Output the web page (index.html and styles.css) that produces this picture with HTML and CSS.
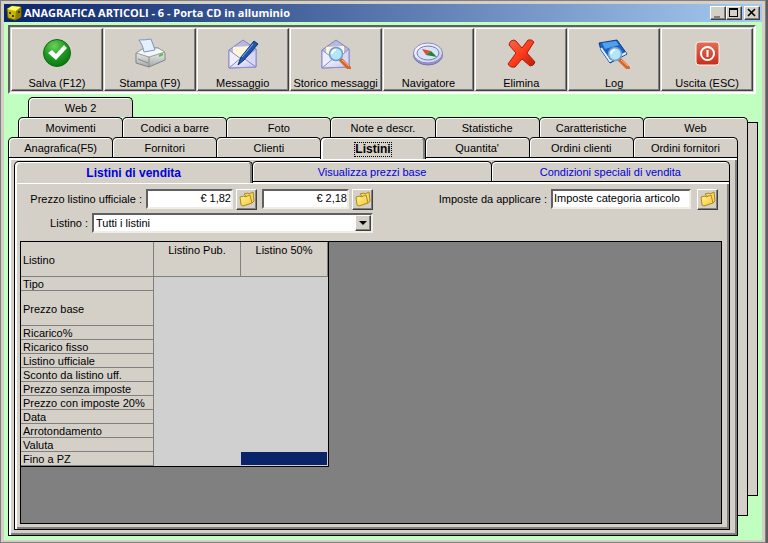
FILE: index.html
```html
<!DOCTYPE html>
<html lang="it">
<head>
    <meta charset="UTF-8">
    <meta name="viewport" content="width=device-width, initial-scale=1.0">
    <title>Anagrafica articoli</title>
    <link rel="stylesheet" href="styles.css">
</head>
<body>

    <!-- Shared icon shapes -->
    <svg class="defs" width="0" height="0" aria-hidden="true">
        <defs>
            <radialGradient id="green" cx="0.4" cy="0.25" r="0.8">
                <stop offset="0" stop-color="#6cd05a"/>
                <stop offset="0.5" stop-color="#1f9e22"/>
                <stop offset="1" stop-color="#0a7212"/>
            </radialGradient>
            <linearGradient id="paper" x1="0" y1="0" x2="1" y2="1">
                <stop offset="0" stop-color="#ffffff"/>
                <stop offset="1" stop-color="#c4c6ee"/>
            </linearGradient>
            <linearGradient id="grey" x1="0" y1="0" x2="0" y2="1">
                <stop offset="0" stop-color="#ffffff"/>
                <stop offset="1" stop-color="#a4a8a8"/>
            </linearGradient>
            <linearGradient id="red" x1="0" y1="0" x2="1" y2="1">
                <stop offset="0" stop-color="#f4694a"/>
                <stop offset="0.5" stop-color="#ff3c1c"/>
                <stop offset="1" stop-color="#b01c08"/>
            </linearGradient>
            <linearGradient id="brick" x1="0" y1="0" x2="0" y2="1">
                <stop offset="0" stop-color="#e07058"/>
                <stop offset="1" stop-color="#c82c18"/>
            </linearGradient>
            <linearGradient id="yellow" x1="0" y1="0" x2="1" y2="1">
                <stop offset="0" stop-color="#fff490"/>
                <stop offset="1" stop-color="#f4c840"/>
            </linearGradient>
            <symbol id="folder" viewBox="0 0 16 16">
                <path d="M5 3l4-1 1 1 4-2 1 9-2 2z" fill="#f8d860" stroke="#b08818"/>
                <path d="M1 6l4-1 1 1 5-2 2 8-9 3-2-1z" fill="url(#yellow)" stroke="#b08818"/>
            </symbol>
            <symbol id="envelope" viewBox="0 0 32 32">
                <path d="M2 13L16 3l13 9v18l-27 1z" fill="#b8b8e0" stroke="#8484bc"/>
                <path d="M6 10l18-1v14H6z" fill="#fff6d8"/>
                <path d="M2 13l12 9L2 31z" fill="#eeeeff" stroke="#8c8cc8"/>
                <path d="M29 12l-12 10 12 8z" fill="#d8d8f6" stroke="#8c8cc8"/>
                <path d="M2 31l13-11 14 10z" fill="url(#paper)" stroke="#8c8cc8"/>
            </symbol>
            <symbol id="lens" viewBox="0 0 32 32">
                <path d="M21 23l8 8" stroke="#d8662c" stroke-width="4" stroke-linecap="round"/>
                <path d="M22 23l7 6" stroke="#ffb880" stroke-width="1"/>
                <circle cx="16" cy="17" r="6.500" fill="#b4e4fa" stroke="#6c9cc8" stroke-width="1.500"/>
                <path d="M12 17a4 4 0 0 1 4-4" fill="none" stroke="#fff" stroke-width="2"/>
            </symbol>
        </defs>
    </svg>

    <div class="window">
        <header class="titlebar">
            <svg class="app-icon" viewBox="0 0 16 16">
                <path d="M1 4l5-3 9 1v10l-6 3-7-2z" fill="#c8b800" stroke="#6c6000"/>
                <path d="M1 4l5-3 9 1-5 4z" fill="#ffff60"/>
                <path d="M10 6l5-4v10l-6 3z" fill="#8c8000"/>
                <path d="M3 7h2v2H3zM6 10h2v2H6zM12 6h2v2h-2z" fill="#3c3600"/>
            </svg>
            <h1>ANAGRAFICA ARTICOLI - 6 - Porta CD in alluminio</h1>
            <div class="window-buttons">
                <button type="button" aria-label="Riduci a icona">
                    <svg viewBox="0 0 12 10"><path d="M2 8h6v2H2z" fill="#808080"/></svg>
                </button>
                <button type="button" aria-label="Ingrandisci">
                    <svg viewBox="0 0 12 10"><path d="M1 0h9v9H1zM2 2v6h7V2z" fill="#000" fill-rule="evenodd"/></svg>
                </button>
                <button type="button" class="close" aria-label="Chiudi">
                    <svg viewBox="0 0 12 10"><path d="M2 1l7 7M9 1L2 8" stroke="#000" stroke-width="1.600"/></svg>
                </button>
            </div>
        </header>

        <nav class="toolbar">
            <button type="button">
                <svg viewBox="0 0 32 32">
                    <circle cx="16" cy="16" r="13.500" fill="url(#green)" stroke="#0c6c10"/>
                    <path d="M7 16l4-3 4 4 8-9 3 3-11 12z" fill="#fff"/>
                </svg>
                <span>Salva (F12)</span>
            </button>
            <button type="button">
                <svg viewBox="0 0 32 32">
                    <path d="M2 16l8-5h14l7 5v7l-16 7-13-4z" fill="url(#grey)" stroke="#808484"/>
                    <path d="M2 16l13 4 16-5-7-4H10z" fill="#f4f6f6" stroke="#9c9c9c"/>
                    <path d="M15 20v10M4 22l10 4" stroke="#888" fill="none"/>
                    <path d="M5 3q7 0 12-1l4 11-11 2q-1-7-5-12z" fill="#e4f0ff" stroke="#7c94c4"/>
                    <path d="M25 19l4-2" stroke="#58c048" stroke-width="2"/>
                </svg>
                <span>Stampa (F9)</span>
            </button>
            <button type="button">
                <svg viewBox="0 0 32 32">
                    <use href="#envelope"/>
                    <path d="M27 4l4 3-14 16-6 5 3-8z" fill="#2058b0" stroke="#103070"/>
                    <path d="M26 7L15 20" stroke="#80b8f0"/>
                </svg>
                <span>Messaggio</span>
            </button>
            <button type="button">
                <svg viewBox="0 0 32 32">
                    <use href="#envelope"/>
                    <use href="#lens"/>
                </svg>
                <span>Storico messaggi</span>
            </button>
            <button type="button">
                <svg viewBox="0 0 32 32">
                    <ellipse cx="16" cy="18" rx="14.500" ry="10" fill="#9494c8" stroke="#7474ac"/>
                    <ellipse cx="16" cy="16" rx="14.500" ry="10" fill="url(#paper)" stroke="#8c8cc0"/>
                    <ellipse cx="16" cy="16" rx="11" ry="7" fill="#d8e4fa" stroke="#7c7cac"/>
                    <path d="M10 12l9 2-5 4z" fill="#e84830"/>
                    <path d="M19 14l6 6-11-2z" fill="#188838"/>
                </svg>
                <span>Navigatore</span>
            </button>
            <button type="button">
                <svg viewBox="0 0 32 32">
                    <path d="M6 4q3-2 5 0l6 7 6-8q4-1 6 2l-7 11 8 9q-1 4-5 4l-8-7-7 8q-5 1-7-3l8-11-7-8q0-2 2-4z" fill="url(#red)" stroke="#a82010"/>
                </svg>
                <span>Elimina</span>
            </button>
            <button type="button">
                <svg viewBox="0 0 32 32">
                    <path d="M1 6l18-3 10 14-17 9L3 13z" fill="#1c60c4" stroke="#0c3c90"/>
                    <path d="M3 11l9 13 16-8" fill="none" stroke="#e4f0ff" stroke-width="2"/>
                    <path d="M4 6l14-2 3 4-14 4z" fill="#50a0f0"/>
                    <use href="#lens" x="1"/>
                </svg>
                <span>Log</span>
            </button>
            <button type="button">
                <svg viewBox="0 0 32 32">
                    <rect x="5" y="5" width="23" height="23" rx="3" fill="url(#brick)" stroke="#fff0e8"/>
                    <circle cx="16.500" cy="16.500" r="6.500" fill="none" stroke="#fff" stroke-width="2"/>
                    <path d="M16.500 13v7" stroke="#fff" stroke-width="2"/>
                </svg>
                <span>Uscita (ESC)</span>
            </button>
        </nav>

        <main class="stack">
            <div class="stack-back">
                <div class="tab-row row-1">
                    <button type="button" class="tab">Web 2</button>
                </div>
                <div class="tab-row row-2">
                    <button type="button" class="tab">Movimenti</button>
                    <button type="button" class="tab">Codici a barre</button>
                    <button type="button" class="tab">Foto</button>
                    <button type="button" class="tab">Note e descr.</button>
                    <button type="button" class="tab">Statistiche</button>
                    <button type="button" class="tab">Caratteristiche</button>
                    <button type="button" class="tab">Web</button>
                </div>
                <div class="stack-middle">
                    <div class="stack-front">
                        <div class="tab-row row-3">
                            <button type="button" class="tab">Anagrafica(F5)</button>
                            <button type="button" class="tab">Fornitori</button>
                            <button type="button" class="tab">Clienti</button>
                            <button type="button" class="tab selected"><span class="focus">Listini</span></button>
                            <button type="button" class="tab">Quantita'</button>
                            <button type="button" class="tab">Ordini clienti</button>
                            <button type="button" class="tab">Ordini fornitori</button>
                        </div>
                        <div class="page outer">
                            <div class="tab-row inner-tabs">
                                <button type="button" class="tab selected">Listini di vendita</button>
                                <button type="button" class="tab">Visualizza prezzi base</button>
                                <button type="button" class="tab">Condizioni speciali di vendita</button>
                            </div>
                            <div class="page inner">
                                <form>
                                    <div class="fields">
                                        <label class="wide" for="prezzo">Prezzo listino ufficiale :</label>
                                        <input class="amount" type="text" id="prezzo" value="€ 1,82">
                                        <button type="button" class="browse" aria-label="Apri prezzo"><svg><use href="#folder"/></svg></button>
                                        <input class="amount second" type="text" value="€ 2,18" aria-label="Prezzo con imposte">
                                        <button type="button" class="browse" aria-label="Apri prezzo con imposte"><svg><use href="#folder"/></svg></button>
                                        <label class="push" for="imposte">Imposte da applicare :</label>
                                        <input class="tax" type="text" id="imposte" value="Imposte categoria articolo">
                                        <button type="button" class="browse last" aria-label="Apri imposte"><svg><use href="#folder"/></svg></button>
                                    </div>
                                    <div class="fields">
                                        <label class="narrow" for="listino">Listino :</label>
                                        <div class="combo">
                                            <select id="listino">
                                                <option>Tutti i listini</option>
                                            </select>
                                            <span class="arrow"></span>
                                        </div>
                                    </div>
                                </form>

                                <div class="grid">
                                    <table>
                                        <thead>
                                            <tr class="head"><th>Listino</th><th>Listino Pub.</th><th>Listino 50%</th></tr>
                                        </thead>
                                        <tbody>
                                            <tr><th>Tipo</th><td></td><td></td></tr>
                                            <tr class="tall"><th>Prezzo base</th><td></td><td></td></tr>
                                            <tr><th>Ricarico%</th><td></td><td></td></tr>
                                            <tr><th>Ricarico fisso</th><td></td><td></td></tr>
                                            <tr><th>Listino ufficiale</th><td></td><td></td></tr>
                                            <tr><th>Sconto da listino uff.</th><td></td><td></td></tr>
                                            <tr><th>Prezzo senza imposte</th><td></td><td></td></tr>
                                            <tr><th>Prezzo con imposte 20%</th><td></td><td></td></tr>
                                            <tr><th>Data</th><td></td><td></td></tr>
                                            <tr><th>Arrotondamento</th><td></td><td></td></tr>
                                            <tr><th>Valuta</th><td></td><td></td></tr>
                                            <tr><th>Fino a PZ</th><td></td><td class="current"></td></tr>
                                        </tbody>
                                    </table>
                                </div>
                            </div>
                        </div>
                    </div>
                    <div class="edge edge-2"></div>
                </div>
            </div>
            <div class="edge edge-1"></div>
        </main>
    </div>

</body>
</html>
```

FILE: styles.css
```css
* {
    box-sizing: border-box;
}

body {
    margin: 0;
    padding-right: 2px;
    min-height: 100vh;
    display: flex;
    background: #605c60;
    font-family: "Liberation Sans", Arial, sans-serif;
    font-size: 11px;
    color: #000;
}

button, input, select {
    font: inherit;
    color: inherit;
    margin: 0;
    padding: 0;
    border-radius: 0;
}

.defs {
    position: absolute;
}

.window {
    flex: 1;
    display: flex;
    flex-direction: column;
    background: #c0ffc0;
    border: 4px solid #d4d0c8;
    border-bottom-width: 3px;
    outline: 1px solid #808080;
    outline-offset: -1px;
}

/* Title bar */
.titlebar {
    display: flex;
    align-items: center;
    height: 18px;
    padding: 0 2px;
    background: linear-gradient(to right, #0a246a, #a6caf0);
}

.app-icon {
    width: 16px;
    height: 16px;
}

.titlebar h1 {
    flex: 1;
    margin: 0 0 0 2px;
    font-family: "Open Sans", Tahoma, sans-serif;
    font-size: 11px;
    font-weight: bold;
    line-height: 18px;
    color: #fff;
}

.window-buttons {
    display: flex;
}

.window-buttons button {
    width: 16px;
    height: 14px;
    display: flex;
    align-items: center;
    justify-content: center;
    background: #d4d0c8;
    border: 1px solid;
    border-color: #fff #404040 #404040 #fff;
    box-shadow: inset -1px -1px #808080;
}

.window-buttons .close {
    margin-left: 2px;
}

.window-buttons svg {
    width: 12px;
    height: 10px;
}

/* Toolbar */
.toolbar {
    display: flex;
    gap: 1px;
    height: 69px;
    margin: 3px 6px 0 4px;
    padding: 1px;
    background: #d4d0c8;
    border: 2px solid;
    border-color: #606060 #fff #fff #606060;
}

.toolbar button {
    flex: 1 1 0;
    min-width: 0;
    display: flex;
    flex-direction: column;
    align-items: center;
    justify-content: space-between;
    padding: 8px 0 0;
    background: #d4d0c8;
    border: 1px solid;
    border-color: #fff #404040 #404040 #fff;
    box-shadow: inset -1px -1px #808080;
    white-space: nowrap;
    line-height: 14px;
}

.toolbar svg {
    width: 32px;
    height: 32px;
}

/* Stacked tab pages */
.stack {
    flex: 1;
    display: flex;
    margin: 3px 4px 4px 4px;
}

.stack-back {
    flex: 1;
    display: flex;
    flex-direction: column;
}

.stack-middle {
    flex: 1;
    display: flex;
}

.stack-front {
    flex: 1;
    display: flex;
    flex-direction: column;
}

.edge {
    width: 10px;
    background: #d4d0c8;
    border-right: 1px solid #000;
    border-bottom: 1px solid #000;
}

.edge-1 {
    margin: 25px 0 40px;
    border-top: 1px solid #000;
}

.edge-2 {
    margin-bottom: 20px;
}

.tab-row {
    display: flex;
    height: 20px;
    padding-left: 1px;
}

.row-1 {
    margin-left: 20px;
}

.row-2 {
    margin-left: 10px;
}

.row-1 .tab {
    flex: 0 0 105px;
}

.row-3 {
    background: linear-gradient(to right, transparent 10px, #d4d0c8 10px);
}

.tab {
    flex: 1 1 0;
    min-width: 0;
    margin-left: -1px;
    background: #d4d0c8;
    border: 1px solid #000;
    border-bottom: none;
    border-radius: 5px 5px 0 0;
    box-shadow: inset 1px 1px #fff;
    white-space: nowrap;
    line-height: 18px;
}

.tab.selected {
    position: relative;
    height: 22px;
    box-shadow: inset 2px 1px #fff, inset -2px 0 #808080;
    font-weight: bold;
    font-size: 12px;
}

.focus {
    display: inline-block;
    line-height: 13px;
    outline: 1px dotted #000;
}

.page {
    flex: 1;
    display: flex;
    flex-direction: column;
    background: #d4d0c8;
    border: 1px solid #000;
    box-shadow: inset 2px 2px #fff, inset -2px -2px #808080;
}

.outer {
    padding: 3px 7px 5px 5px;
}

.inner-tabs .tab {
    color: #0000e0;
}

.inner {
    padding: 7px 7px 5px 5px;
}

/* Fields */
.fields {
    display: flex;
    align-items: center;
    height: 20px;
    margin-bottom: 4px;
}

.fields label {
    margin-right: 4px;
    text-align: right;
    white-space: nowrap;
}

.fields .wide {
    width: 122px;
}

.fields .narrow {
    width: 68px;
}

.fields .push {
    margin-left: auto;
}

.fields input,
.fields select {
    height: 20px;
    padding: 0 1px 2px;
    background: #fff;
    border: 2px solid;
    border-color: #606060 #f0ede6 #f0ede6 #606060;
}

.fields .amount {
    width: 87px;
    padding-right: 0;
    text-align: right;
}

.fields .second {
    margin-left: 5px;
}

.fields .tax {
    width: 140px;
}

.browse {
    display: flex;
    align-items: center;
    justify-content: center;
    width: 21px;
    height: 21px;
    margin-left: 3px;
    background: #d4d0c8;
    border: 1px solid;
    border-color: #fff #404040 #404040 #fff;
    box-shadow: inset -1px -1px #808080;
}

.browse svg {
    width: 16px;
    height: 16px;
}

.browse.last {
    margin: 0 4px 0 6px;
}

.combo {
    position: relative;
    width: 281px;
}

.fields select {
    display: block;
    width: 100%;
    padding: 0 18px 0 2px;
    appearance: none;
}

/* Drop-down button drawn over the select */
.arrow {
    position: absolute;
    top: 2px;
    right: 2px;
    width: 16px;
    height: 16px;
    background: #d4d0c8;
    border: 1px solid;
    border-color: #fff #404040 #404040 #fff;
    box-shadow: inset -1px -1px #808080;
    pointer-events: none;
}

.arrow::after {
    content: "";
    display: block;
    width: 0;
    margin: 5px auto 0 3px;
    border: 4px solid transparent;
    border-top-color: #000;
    border-bottom: none;
}

/* Price grid */
.grid {
    flex: 1;
    margin-top: 4px;
    background: #808080;
    border: 1px solid #000;
}

table {
    table-layout: fixed;
    width: 308px;
    border-collapse: separate;
    border-spacing: 0;
    border-right: 1px solid #000;
    border-bottom: 1px solid #000;
}

tr {
    height: 14px;
}

.head,
.tall {
    height: 35px;
}

th, td {
    padding: 0;
    line-height: 12px;
    background: #d0d0d0;
}

th {
    padding: 1px 0 0 2px;
    background: #d4d0c8;
    border-right: 1px solid #808080;
    border-bottom: 1px solid #808080;
    font-weight: normal;
    text-align: left;
    white-space: nowrap;
}

.head th {
    width: 87px;
}

.head th:first-child {
    width: 133px;
}

.head th + th {
    padding: 2px 0 0;
    text-align: center;
    vertical-align: top;
}

.current {
    background: #0a246a;
    border-right: 1px solid #d0d0d0;
    border-bottom: 1px solid #d0d0d0;
}
```
